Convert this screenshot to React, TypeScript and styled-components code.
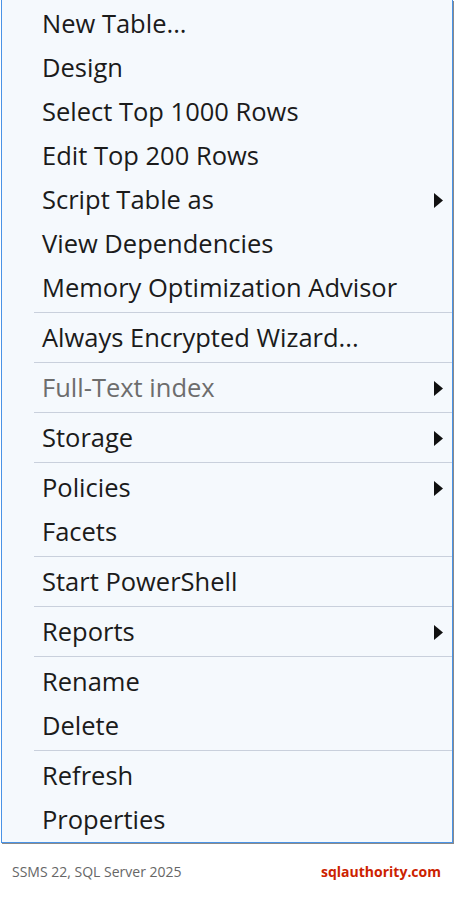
import { FC } from "react";
import styled, { createGlobalStyle } from "styled-components";

type Entry =
  | { kind: "item"; label: string; submenu?: boolean; disabled?: boolean }
  | { kind: "sep" };

const entries: Entry[] = [
  { kind: "item", label: "New Table..." },
  { kind: "item", label: "Design" },
  { kind: "item", label: "Select Top 1000 Rows" },
  { kind: "item", label: "Edit Top 200 Rows" },
  { kind: "item", label: "Script Table as", submenu: true },
  { kind: "item", label: "View Dependencies" },
  { kind: "item", label: "Memory Optimization Advisor" },
  { kind: "sep" },
  { kind: "item", label: "Always Encrypted Wizard..." },
  { kind: "sep" },
  { kind: "item", label: "Full-Text index", submenu: true, disabled: true },
  { kind: "sep" },
  { kind: "item", label: "Storage", submenu: true },
  { kind: "sep" },
  { kind: "item", label: "Policies", submenu: true },
  { kind: "item", label: "Facets" },
  { kind: "sep" },
  { kind: "item", label: "Start PowerShell" },
  { kind: "sep" },
  { kind: "item", label: "Reports", submenu: true },
  { kind: "sep" },
  { kind: "item", label: "Rename" },
  { kind: "item", label: "Delete" },
  { kind: "sep" },
  { kind: "item", label: "Refresh" },
  { kind: "item", label: "Properties" },
];

const SubArrow: FC = () => (
  <svg width="9" height="15" viewBox="0 0 9 15">
    <path d="M0 0 L9 7.5 L0 15 Z" fill="#111" />
  </svg>
);

const App: FC = () => {
  return (
    <>
      <GlobalStyle />
      <Page>
        <Menu>
          {entries.map((e, i) =>
            e.kind === "sep" ? (
              <Separator key={i} />
            ) : (
              <Item key={i} $disabled={e.disabled}>
                <Label>{e.label}</Label>
                {e.submenu && <SubArrow />}
              </Item>
            )
          )}
        </Menu>
        <Footer>
          <Caption>SSMS 22, SQL Server 2025</Caption>
          <Brand>sqlauthority.com</Brand>
        </Footer>
      </Page>
    </>
  );
};

export default App;

const GlobalStyle = createGlobalStyle`
  html, body {
    margin: 0;
    padding: 0;
    background: #ffffff;
  }
  * {
    box-sizing: border-box;
  }
`;

const Page = styled.div`
  width: 454px;
  height: 900px;
  display: flex;
  flex-direction: column;
  font-family: "Open Sans", "Noto Sans", sans-serif;
`;

const Menu = styled.div`
  margin-left: 1px;
  width: 452px;
  padding-top: 2px;
  background: #f5f9fd;
  border: 1px solid #4a93e6;
  border-top: none;
  box-shadow: 1px 1px 0 #8a8a8a;
  display: flex;
  flex-direction: column;
`;

const Item = styled.div<{ $disabled?: boolean }>`
  height: 44px;
  display: flex;
  align-items: center;
  justify-content: space-between;
  padding: 0 9px 0 40px;
  color: ${(p) => (p.$disabled ? "#6d6d6d" : "#1b1b1b")};
`;

const Label = styled.span`
  font-size: 25.5px;
  line-height: 1;
  white-space: nowrap;
`;

const Separator = styled.div`
  height: 6px;
  padding: 2px 0 0 32px;

  &::after {
    content: "";
    display: block;
    height: 1px;
    background: #c9d0dc;
  }
`;

const Footer = styled.div`
  flex: 1;
  display: flex;
  align-items: center;
  justify-content: space-between;
  padding: 0 13px 0 12px;
`;

const Caption = styled.span`
  font-size: 14px;
  color: #666666;
`;

const Brand = styled.span`
  font-size: 14px;
  font-weight: 700;
  color: #cc2200;
`;
